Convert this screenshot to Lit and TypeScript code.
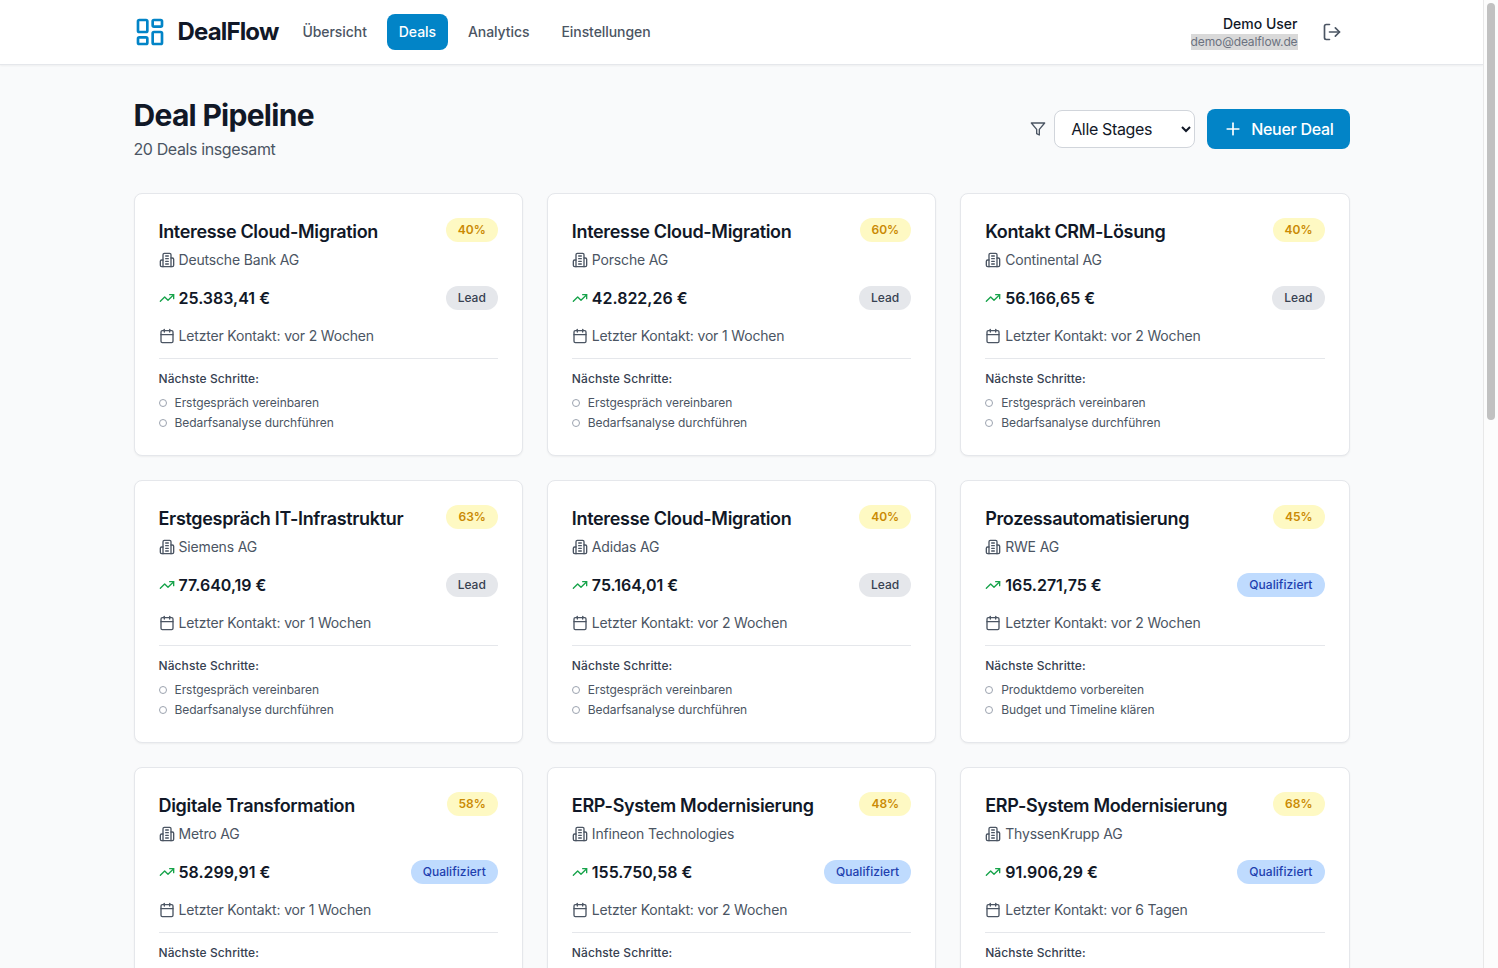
import { LitElement, html, css, svg } from "lit";
import { customElement } from "lit/decorators.js";

type Deal = { title: string; company: string; pct: number; amount: string; stage: string; contact: string; steps: string[] };

const lead = ["Erstgespräch vereinbaren", "Bedarfsanalyse durchführen"];
const qual = ["Produktdemo vorbereiten", "Budget und Timeline klären"];
const prop = ["Angebot erstellen", "Angebot nachfassen"];

const deals: Deal[] = [
  { title: "Interesse Cloud-Migration", company: "Deutsche Bank AG", pct: 40, amount: "25.383,41 €", stage: "Lead", contact: "vor 2 Wochen", steps: lead },
  { title: "Interesse Cloud-Migration", company: "Porsche AG", pct: 60, amount: "42.822,26 €", stage: "Lead", contact: "vor 1 Wochen", steps: lead },
  { title: "Kontakt CRM-Lösung", company: "Continental AG", pct: 40, amount: "56.166,65 €", stage: "Lead", contact: "vor 2 Wochen", steps: lead },
  { title: "Erstgespräch IT-Infrastruktur", company: "Siemens AG", pct: 63, amount: "77.640,19 €", stage: "Lead", contact: "vor 1 Wochen", steps: lead },
  { title: "Interesse Cloud-Migration", company: "Adidas AG", pct: 40, amount: "75.164,01 €", stage: "Lead", contact: "vor 2 Wochen", steps: lead },
  { title: "Prozessautomatisierung", company: "RWE AG", pct: 45, amount: "165.271,75 €", stage: "Qualifiziert", contact: "vor 2 Wochen", steps: qual },
  { title: "Digitale Transformation", company: "Metro AG", pct: 58, amount: "58.299,91 €", stage: "Qualifiziert", contact: "vor 1 Wochen", steps: qual },
  { title: "ERP-System Modernisierung", company: "Infineon Technologies", pct: 48, amount: "155.750,58 €", stage: "Qualifiziert", contact: "vor 2 Wochen", steps: qual },
  { title: "ERP-System Modernisierung", company: "ThyssenKrupp AG", pct: 68, amount: "91.906,29 €", stage: "Qualifiziert", contact: "vor 6 Tagen", steps: qual },
  { title: "Digitale Transformation", company: "BASF SE", pct: 52, amount: "120.410,30 €", stage: "Qualifiziert", contact: "vor 1 Wochen", steps: qual },
  { title: "Prozessautomatisierung", company: "Bayer AG", pct: 55, amount: "98.245,12 €", stage: "Qualifiziert", contact: "vor 5 Tagen", steps: qual },
  { title: "Cloud-Migration Projekt", company: "Allianz SE", pct: 70, amount: "210.880,44 €", stage: "Qualifiziert", contact: "vor 4 Tagen", steps: prop },
  { title: "CRM-Lösung Rollout", company: "SAP SE", pct: 72, amount: "184.320,00 €", stage: "Qualifiziert", contact: "vor 3 Tagen", steps: prop },
  { title: "IT-Infrastruktur Upgrade", company: "Volkswagen AG", pct: 75, amount: "246.115,80 €", stage: "Qualifiziert", contact: "vor 6 Tagen", steps: prop },
  { title: "ERP-System Modernisierung", company: "BMW AG", pct: 66, amount: "132.905,67 €", stage: "Qualifiziert", contact: "vor 1 Wochen", steps: prop },
  { title: "Digitale Transformation", company: "Deutsche Telekom AG", pct: 61, amount: "88.470,23 €", stage: "Qualifiziert", contact: "vor 2 Wochen", steps: prop },
  { title: "Prozessautomatisierung", company: "Lufthansa AG", pct: 57, amount: "64.730,95 €", stage: "Qualifiziert", contact: "vor 1 Wochen", steps: prop },
  { title: "Cloud-Migration Projekt", company: "Henkel AG", pct: 50, amount: "71.215,48 €", stage: "Qualifiziert", contact: "vor 2 Wochen", steps: prop },
  { title: "CRM-Lösung Rollout", company: "Merck KGaA", pct: 64, amount: "109.642,36 €", stage: "Qualifiziert", contact: "vor 5 Tagen", steps: prop },
  { title: "IT-Infrastruktur Upgrade", company: "E.ON SE", pct: 59, amount: "143.087,72 €", stage: "Qualifiziert", contact: "vor 1 Wochen", steps: prop },
];

const icon = (cls: string, body: unknown) => html`<svg class=${cls} viewBox="0 0 24 24" fill="none" stroke="currentColor" stroke-width="2" stroke-linecap="round" stroke-linejoin="round">${body}</svg>`;

const icons = {
  logo: svg`<rect x="3" y="3" width="7" height="9" rx="1"/><rect x="14" y="3" width="7" height="5" rx="1"/><rect x="14" y="12" width="7" height="9" rx="1"/><rect x="3" y="16" width="7" height="5" rx="1"/>`,
  logout: svg`<path d="M9 21H5a2 2 0 0 1-2-2V5a2 2 0 0 1 2-2h4"/><polyline points="16 17 21 12 16 7"/><line x1="21" y1="12" x2="9" y2="12"/>`,
  filter: svg`<polygon points="22 3 2 3 10 12.46 10 19 14 21 14 12.46 22 3"/>`,
  plus: svg`<path d="M5 12h14"/><path d="M12 5v14"/>`,
  building: svg`<path d="M6 22V4a2 2 0 0 1 2-2h8a2 2 0 0 1 2 2v18Z"/><path d="M6 12H4a2 2 0 0 0-2 2v6a2 2 0 0 0 2 2h2"/><path d="M18 9h2a2 2 0 0 1 2 2v9a2 2 0 0 1-2 2h-2"/><path d="M10 6h4"/><path d="M10 10h4"/><path d="M10 14h4"/><path d="M10 18h4"/>`,
  trend: svg`<polyline points="22 7 13.5 15.5 8.5 10.5 2 17"/><polyline points="16 7 22 7 22 13"/>`,
  calendar: svg`<rect x="3" y="4" width="18" height="18" rx="2"/><line x1="16" y1="2" x2="16" y2="6"/><line x1="8" y1="2" x2="8" y2="6"/><line x1="3" y1="10" x2="21" y2="10"/>`,
};

@customElement("app-root")
export class AppRoot extends LitElement {
  static styles = css`
    :host {
      display: block;
      color: #111827;
      font-family: Inter, "Liberation Sans", sans-serif;
      -webkit-font-smoothing: antialiased;
    }
    * { box-sizing: border-box; }
    .shell { display: flex; height: 100vh; overflow: hidden; }
    .page { flex: 1; min-width: 0; overflow-y: auto; background: #f9fafb; }
    .sb { flex: none; width: 15px; padding: 3px 3px 0 3px; background: #fcfcfc; border-left: 1px solid #e8e8e8; }
    .thumb { width: 8px; height: 417px; border-radius: 4px; background: #c1c1c1; }
    .topbar {
      background: #fff;
      border-bottom: 1px solid #e5e7eb;
      box-shadow: 0 1px 2px rgba(0,0,0,.05);
    }
    .wrap { max-width: 1280px; margin: 0 auto; padding: 0 32px; }
    .bar { height: 64px; display: flex; align-items: center; justify-content: space-between; }
    .left { display: flex; align-items: center; }
    .brand { display: flex; align-items: center; gap: 12px; margin-right: 12px; }
    .logo { width: 32px; height: 32px; color: #0284c7; }
    .name { font-size: 24px; line-height: 32px; font-weight: 700; letter-spacing: -0.035em; }
    nav { display: flex; gap: 8px; }
    nav a {
      padding: 8px 12px; border-radius: 8px; font-size: 14px; line-height: 20px;
      font-weight: 500; color: #4b5563; letter-spacing: -0.005em;
    }
    nav a.on { background: #0284c7; color: #fff; }
    .user { display: flex; align-items: center; gap: 16px; }
    .uinfo { text-align: right; display: flex; flex-direction: column; align-items: flex-end; }
    .uname { font-size: 14px; line-height: 20px; font-weight: 500; }
    .umail { font-size: 12px; line-height: 16px; color: #6b7280; background: #d9d9d9; letter-spacing: -0.01em; }
    .out { padding: 8px; color: #4b5563; display: flex; border-radius: 8px; }
    .out svg { width: 20px; height: 20px; }
    main.wrap { padding-top: 32px; padding-bottom: 32px; }
    .head { display: flex; align-items: center; justify-content: space-between; margin-bottom: 32px; }
    h1 { margin: 0; font-size: 30px; line-height: 36px; font-weight: 700; letter-spacing: -0.024em; }
    .sub { margin: 4px 0 0; font-size: 16px; line-height: 24px; color: #4b5563; letter-spacing: -0.024em; }
    .tools { display: flex; align-items: center; gap: 12px; }
    .fwrap { display: flex; align-items: center; gap: 8px; }
    .filter { width: 16px; height: 16px; color: #4b5563; }
    select {
      width: 141px; height: 38px; padding: 0 12px; border: 1px solid #d1d5db; border-radius: 8px;
      background: #fff; color: #111827; font: 400 16px/24px Inter, "Liberation Sans", sans-serif;
      letter-spacing: -0.022em;
    }
    .new {
      display: flex; align-items: center; gap: 8px; height: 40px; padding: 8px 16px;
      border: 0; border-radius: 8px; background: #0284c7; color: #fff;
      font: 500 16px/24px Inter, "Liberation Sans", sans-serif; letter-spacing: -0.018em;
    }
    .new svg { width: 20px; height: 20px; }
    .grid { display: grid; grid-template-columns: repeat(3, 1fr); gap: 24px; }
    .card {
      background: #fff; border: 1px solid #e5e7eb; border-radius: 8px; padding: 24px;
      box-shadow: 0 1px 2px rgba(0,0,0,.05);
    }
    .row { display: flex; align-items: flex-start; justify-content: space-between; gap: 8px; }
    .row.mid { align-items: center; margin-top: 16px; }
    h3 { margin: 0; font-size: 18px; line-height: 28px; font-weight: 600; letter-spacing: -0.018em; }
    .pill { padding: 4px 12px; border-radius: 999px; font-size: 12px; line-height: 16px; font-weight: 500; white-space: nowrap; }
    .pct { background: #fef9c3; color: #ca8a04; font-weight: 600; }
    .Lead { background: #e5e7eb; color: #374151; }
    .Qualifiziert { background: #bfdbfe; color: #1e40af; letter-spacing: 0.004em; }
    .line { display: flex; align-items: center; gap: 4px; font-size: 14px; line-height: 20px; color: #4b5563; letter-spacing: -0.012em; }
    .ic { width: 16px; height: 16px; flex: none; }
    .company { margin-top: 4px; }
    .amount { display: flex; align-items: center; gap: 4px; font-size: 16px; line-height: 24px; font-weight: 600; }
    .amount .ic { color: #16a34a; }
    .contact { margin-top: 16px; }
    .steps { margin-top: 12px; padding-top: 12px; border-top: 1px solid #e5e7eb; }
    .steps h4 { margin: 0 0 8px; font-size: 12px; line-height: 16px; font-weight: 500; color: #374151; letter-spacing: 0.008em; }
    ul { list-style: none; margin: 0; padding: 0; display: flex; flex-direction: column; gap: 4px; }
    li { display: flex; align-items: center; gap: 8px; font-size: 12px; line-height: 16px; color: #4b5563; letter-spacing: -0.005em; }
    .dot { width: 8px; height: 8px; border: 1px solid #9ca3af; border-radius: 50%; flex: none; }
  `;

  render() {
    return html`
      <div class="shell">
      <div class="page">
      <header class="topbar">
        <div class="wrap bar">
          <div class="left">
            <div class="brand">${icon("logo", icons.logo)}<span class="name">DealFlow</span></div>
            <nav>
              <a>Übersicht</a><a class="on">Deals</a><a>Analytics</a><a>Einstellungen</a>
            </nav>
          </div>
          <div class="user">
            <div class="uinfo"><span class="uname">Demo User</span><span class="umail">demo@dealflow.de</span></div>
            <span class="out">${icon("", icons.logout)}</span>
          </div>
        </div>
      </header>
      <main class="wrap">
        <div class="head">
          <div>
            <h1>Deal Pipeline</h1>
            <p class="sub">20 Deals insgesamt</p>
          </div>
          <div class="tools">
            <div class="fwrap">
              ${icon("filter", icons.filter)}
              <select><option>Alle Stages</option><option>Lead</option><option>Qualifiziert</option></select>
            </div>
            <button class="new">${icon("", icons.plus)}Neuer Deal</button>
          </div>
        </div>
        <div class="grid">
          ${deals.map((d) => html`
            <article class="card">
              <div class="row">
                <h3>${d.title}</h3>
                <span class="pill pct">${d.pct}%</span>
              </div>
              <div class="line company">${icon("ic", icons.building)}${d.company}</div>
              <div class="row mid">
                <div class="amount">${icon("ic", icons.trend)}${d.amount}</div>
                <span class="pill ${d.stage}">${d.stage}</span>
              </div>
              <div class="line contact">${icon("ic", icons.calendar)}Letzter Kontakt: ${d.contact}</div>
              <div class="steps">
                <h4>Nächste Schritte:</h4>
                <ul>${d.steps.map((s) => html`<li><span class="dot"></span>${s}</li>`)}</ul>
              </div>
            </article>`)}
        </div>
      </main>
      </div>
      <div class="sb"><div class="thumb"></div></div>
      </div>
    `;
  }
}
